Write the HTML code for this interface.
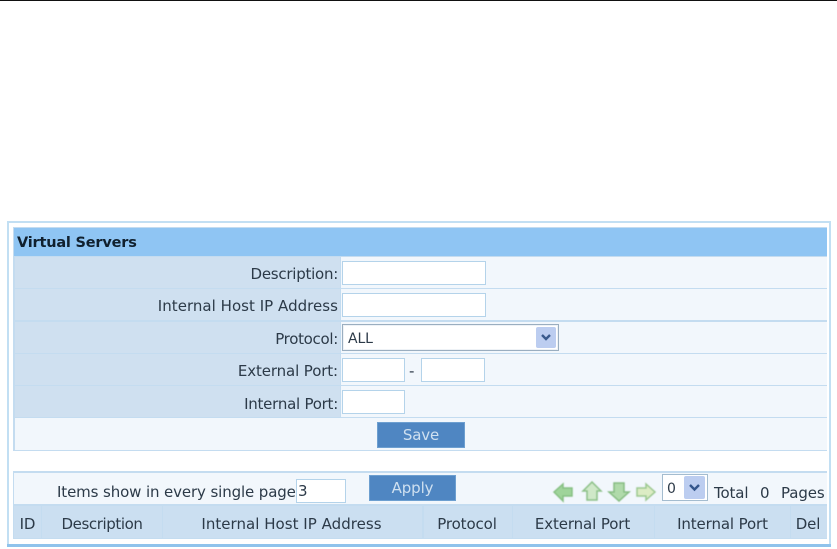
<!DOCTYPE html>
<html><head><meta charset="utf-8">
<style>
html,body{margin:0;padding:0;background:#fff}
#p{position:relative;width:837px;height:549px;overflow:hidden;background:#fff;font-family:"DejaVu Sans","Liberation Sans",sans-serif;font-size:15px;letter-spacing:-.12px;color:#2c3a48}
#p div{position:absolute;box-sizing:border-box}
.t{white-space:nowrap;line-height:18px;height:18px;filter:blur(.35px)}
.r{text-align:right}.c{text-align:center}
.l{background:#cfe0f0}.v{background:#f2f7fc}
.i{background:#fff;border:1px solid #b4d3ea}
.b{background:#4f86c2;border:1px solid #6d9fd0;color:#cfe0f0;text-align:center;line-height:24px}
.h{background:#cbdff1}
</style></head><body><div id="p">
<div style="left:0;top:0;width:837px;height:1px;background:#111"></div>

<div style="left:7px;top:221px;width:824px;height:325px;border:2px solid #c2dff3;border-bottom:none;background:#fff"></div>
<div style="left:7px;top:544px;width:824px;height:3px;background:#8fc3ec"></div>
<div style="left:13px;top:227px;width:814px;height:312px;background:#c4dcf0"></div>
<div style="left:13px;top:451px;width:814px;height:20px;background:#fff"></div>
<div style="left:13px;top:539px;width:814px;height:5px;background:#fff"></div>

<div style="left:14px;top:228px;width:813px;height:28px;background:#8fc5f3"></div>
<div class="t" style="left:17px;top:234px;font-weight:bold;font-size:14.5px;color:#10202e;letter-spacing:-.2px">Virtual Servers</div>

<div class="l" style="left:15px;top:257px;width:325px;height:31px"></div>
<div class="v" style="left:341px;top:257px;width:486px;height:31px"></div>
<div class="l" style="left:15px;top:289px;width:325px;height:31px"></div>
<div class="v" style="left:341px;top:289px;width:486px;height:31px"></div>
<div class="l" style="left:15px;top:322px;width:325px;height:31px"></div>
<div class="v" style="left:341px;top:322px;width:486px;height:31px"></div>
<div class="l" style="left:15px;top:354px;width:325px;height:31px"></div>
<div class="v" style="left:341px;top:354px;width:486px;height:31px"></div>
<div class="l" style="left:15px;top:386px;width:325px;height:31px"></div>
<div class="v" style="left:341px;top:386px;width:486px;height:31px"></div>
<div class="v" style="left:15px;top:418px;width:812px;height:32px"></div>

<div class="t r" style="left:100px;width:238px;top:265px;letter-spacing:-.25px">Description:</div>
<div class="t r" style="left:100px;width:238px;top:297px;letter-spacing:.03px">Internal Host IP Address</div>
<div class="t r" style="left:100px;width:238px;top:330px;letter-spacing:-.3px">Protocol:</div>
<div class="t r" style="left:100px;width:238px;top:362px">External Port:</div>
<div class="t r" style="left:100px;width:238px;top:395px;letter-spacing:-.25px">Internal Port:</div>

<div class="i" style="left:342px;top:261px;width:144px;height:24px"></div>
<div class="i" style="left:342px;top:293px;width:144px;height:24px"></div>
<div class="i" style="left:342px;top:324px;width:217px;height:27px;border:1px solid #9aaec0;box-shadow:inset 0 0 0 1px #eef2f6"></div>
<div class="t" style="left:348px;top:330px;font-size:14px">ALL</div>
<div style="left:536px;top:327px;width:20px;height:21px;background:#bccdf0;border-radius:2px"></div>
<svg style="position:absolute;left:536px;top:327px" width="20" height="21"><path d="M6 8l4 4 4-4" fill="none" stroke="#3a5a8c" stroke-width="2.4"/></svg>

<div class="i" style="left:342px;top:358px;width:63px;height:24px"></div>
<div class="t" style="left:409px;top:362px">-</div>
<div class="i" style="left:421px;top:358px;width:64px;height:24px"></div>
<div class="i" style="left:342px;top:390px;width:63px;height:24px"></div>

<div class="b" style="left:377px;top:422px;width:88px;height:26px;filter:blur(.35px)">Save</div>

<div class="v" style="left:14px;top:473px;width:813px;height:31px"></div>
<div class="t" style="left:57px;top:483px">Items show in every single page</div>
<div class="i" style="left:296px;top:479px;width:50px;height:24px;color:#2c3a48;padding-left:1px;line-height:22px">3</div>
<div class="b" style="left:369px;top:475px;width:87px;height:26px;filter:blur(.35px)">Apply</div>

<svg style="position:absolute;left:552px;top:481px;filter:blur(.6px)" width="108" height="22">
<path d="M2 11l9-8v4h9v8h-9v5z" fill="#9fd49a" stroke="#86bf82" stroke-width="1.500"/>
<path d="M40 1l9 9h-4v9h-10v-9h-4z" fill="#cfe8c8" stroke="#8cc088" stroke-width="1.500"/>
<path d="M62 2h10v9h5l-10 9-10-9h5z" fill="#b0daaa" stroke="#86bc82" stroke-width="1.500"/>
<path d="M85 7h9v-4l9 8-9 8v-4h-9z" fill="#dcecc4" stroke="#9cc890" stroke-width="1.500"/>
</svg>

<div class="i" style="left:662px;top:474px;width:46px;height:27px;border-color:#a4bccf"></div>
<div class="t" style="left:667px;top:480px;font-size:14px">0</div>
<div style="left:684px;top:476px;width:21px;height:23px;background:#bccdf0;border-radius:2px"></div>
<svg style="position:absolute;left:684px;top:476px" width="21" height="23"><path d="M6 9l4.500 4.500 4.500-4.500" fill="none" stroke="#34568c" stroke-width="2.400"/></svg>
<div class="t" style="left:714px;top:484px">Total</div>
<div class="t" style="left:760px;top:484px">0</div>
<div class="t" style="left:781px;top:484px;letter-spacing:-.1px">Pages</div>

<div class="h" style="left:14px;top:506px;width:27px;height:32px"></div>
<div class="h" style="left:42px;top:506px;width:120px;height:32px"></div>
<div class="h" style="left:163px;top:506px;width:259px;height:32px"></div>
<div class="h" style="left:424px;top:506px;width:88px;height:32px"></div>
<div class="h" style="left:513px;top:506px;width:141px;height:32px"></div>
<div class="h" style="left:655px;top:506px;width:135px;height:32px"></div>
<div class="h" style="left:791px;top:506px;width:36px;height:32px"></div>
<div class="t c" style="left:14px;width:27px;top:515px">ID</div>
<div class="t c" style="left:42px;width:120px;top:515px;letter-spacing:-.4px">Description</div>
<div class="t c" style="left:163px;width:257px;top:515px;letter-spacing:.03px">Internal Host IP Address</div>
<div class="t c" style="left:424px;width:86px;top:515px">Protocol</div>
<div class="t c" style="left:513px;width:139px;top:515px">External Port</div>
<div class="t c" style="left:655px;width:135px;top:515px">Internal Port</div>
<div class="t c" style="left:791px;width:34px;top:515px">Del</div>
</div></body></html>
